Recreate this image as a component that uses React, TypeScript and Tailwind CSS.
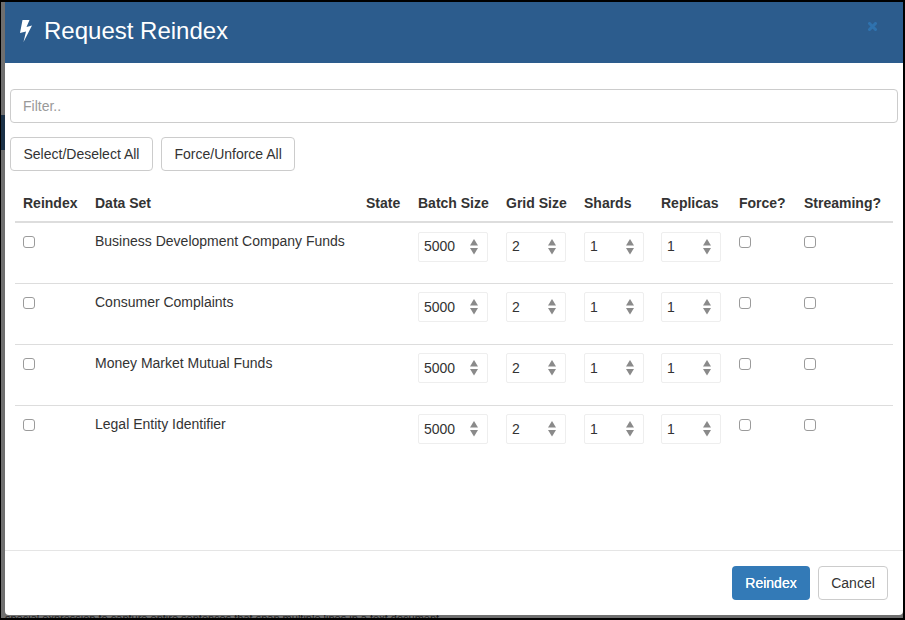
import React from 'react';

const FONT = "font-['Liberation_Sans',Arial,sans-serif]";

const rows = [
  { name: 'Business Development Company Funds' },
  { name: 'Consumer Complaints' },
  { name: 'Money Market Mutual Funds' },
  { name: 'Legal Entity Identifier' },
];

function Bolt() {
  return (
    <svg width="13" height="24" viewBox="0 0 13 24" className="shrink-0" aria-hidden>
      <path d="M2.5 1h7L6.5 8 12 6.5 3.5 23 6 12.5 0 14z" fill="#ffffff" />
    </svg>
  );
}

function CloseIcon() {
  return (
    <svg width="9" height="9" viewBox="0 0 9 9" className="mt-[6px] shrink-0" aria-hidden>
      <path d="M1.5 1.5l6 6M7.5 1.5l-6 6" stroke="#2f72ae" strokeWidth="3" strokeLinecap="square" fill="none" />
    </svg>
  );
}

function Check() {
  return (
    <input
      type="checkbox"
      className="block h-3 w-3 appearance-none rounded-[3px] border border-[#9b9b9b] bg-white"
    />
  );
}

function Spinner({ value, width }: { value: string; width: string }) {
  return (
    <div className={`flex h-[30px] items-center justify-between rounded-[2px] border border-[#eeeeee] pl-[5px] pr-[9px] text-[14px] text-[#333333] ${width}`}>
      <span>{value}</span>
      <svg width="8" height="16" viewBox="0 0 8 16" aria-hidden>
        <path d="M4 0l4 6.5H0z" fill="#8a8a8a" />
        <path d="M4 15.5l4-6.5H0z" fill="#8a8a8a" />
      </svg>
    </div>
  );
}

function Btn({ children }: { children: React.ReactNode }) {
  return (
    <button className="h-[34px] rounded-[4px] border border-[#cccccc] bg-white px-[12.5px] text-[14px] text-[#333333]">
      {children}
    </button>
  );
}

export default function App() {
  return (
    <div className={`${FONT} flex h-[620px] w-[905px] flex-col overflow-hidden bg-black pb-[2px] pl-[1px] pr-[2px] pt-[2px]`}>
      <div className="flex min-h-0 flex-1 bg-[#6f6f6f]">
        {/* page behind the modal, only a sliver shows */}
        <div className="flex w-[4px] shrink-0 flex-col">
          <div className="h-[113px]" />
          <div className="h-[35px] bg-[#1b3147]" />
        </div>
        <div className="flex flex-1 flex-col rounded-b-[4px] bg-white">
          <header className="flex h-[61px] shrink-0 items-start justify-between bg-[#2c5c8d] pl-[15px] pr-[26px] pt-[14px]">
            <div className="flex items-center gap-[11px] text-[24px] leading-[30px] text-white">
              <Bolt />
              <span>Request Reindex</span>
            </div>
            <CloseIcon />
          </header>

          <div className="flex-1 px-[5px] pt-[26px]">
            <input
              placeholder="Filter.."
              className="block h-[34px] w-full rounded-[4px] border border-[#cccccc] px-3 text-[14px] text-[#555555] placeholder:text-[#999999]"
            />
            <div className="mt-[14px] flex gap-2">
              <Btn>Select/Deselect All</Btn>
              <Btn>Force/Unforce All</Btn>
            </div>

            <table className="ml-[5px] mt-[14px] w-[878px] table-fixed border-collapse text-[14px] text-[#333333]">
              <colgroup>
                <col className="w-[72px]" />
                <col className="w-[271px]" />
                <col className="w-[52px]" />
                <col className="w-[88px]" />
                <col className="w-[78px]" />
                <col className="w-[77px]" />
                <col className="w-[78px]" />
                <col className="w-[65px]" />
                <col className="w-[97px]" />
              </colgroup>
              <thead>
                <tr className="border-b-2 border-[#dddddd] text-left">
                  {['Reindex', 'Data Set', 'State', 'Batch Size', 'Grid Size', 'Shards', 'Replicas', 'Force?', 'Streaming?'].map((h) => (
                    <th key={h} className="h-[37px] px-2 align-middle font-bold">
                      {h}
                    </th>
                  ))}
                </tr>
              </thead>
              <tbody>
                {rows.map((row, i) => (
                  <tr key={row.name} className={i < rows.length - 1 ? 'h-[61px] border-b border-[#dddddd]' : 'h-[61px]'}>
                    <td className="px-2 pt-[8px] align-top"><div className="pt-[5px]"><Check /></div></td>
                    <td className="px-2 pt-[8px] align-top leading-[20px]">{row.name}</td>
                    <td />
                    <td className="px-2 pt-[8.5px] align-top"><Spinner value="5000" width="w-[70px]" /></td>
                    <td className="px-2 pt-[8.5px] align-top"><Spinner value="2" width="w-[60px]" /></td>
                    <td className="px-2 pt-[8.5px] align-top"><Spinner value="1" width="w-[60px]" /></td>
                    <td className="px-2 pt-[8.5px] align-top"><Spinner value="1" width="w-[60px]" /></td>
                    <td className="px-2 pt-[8px] align-top"><div className="pt-[5px]"><Check /></div></td>
                    <td className="px-2 pt-[8px] align-top"><div className="pt-[5px]"><Check /></div></td>
                  </tr>
                ))}
              </tbody>
            </table>
          </div>

          <footer className="flex h-[65px] shrink-0 items-start justify-end gap-[8px] border-t border-[#e5e5e5] pr-[15px] pt-[15px]">
            <button className="h-[34px] w-[78px] rounded-[4px] bg-[#337ab7] text-[14px] text-white [text-shadow:0_0_0.6px_#ffffff]">Reindex</button>
            <button className="h-[34px] w-[70px] rounded-[4px] border border-[#cccccc] bg-white text-[14px] text-[#333333]">Cancel</button>
          </footer>
        </div>
      </div>
      <div className="h-[3px] shrink-0 overflow-hidden whitespace-nowrap bg-[#6f6f6f] pl-[4px] text-[11px] leading-[14px] text-[#222222]">
        <div className="-mt-[4px]">special expression to capture entire sentences that span multiple lines in a text document</div>
      </div>
    </div>
  );
}
